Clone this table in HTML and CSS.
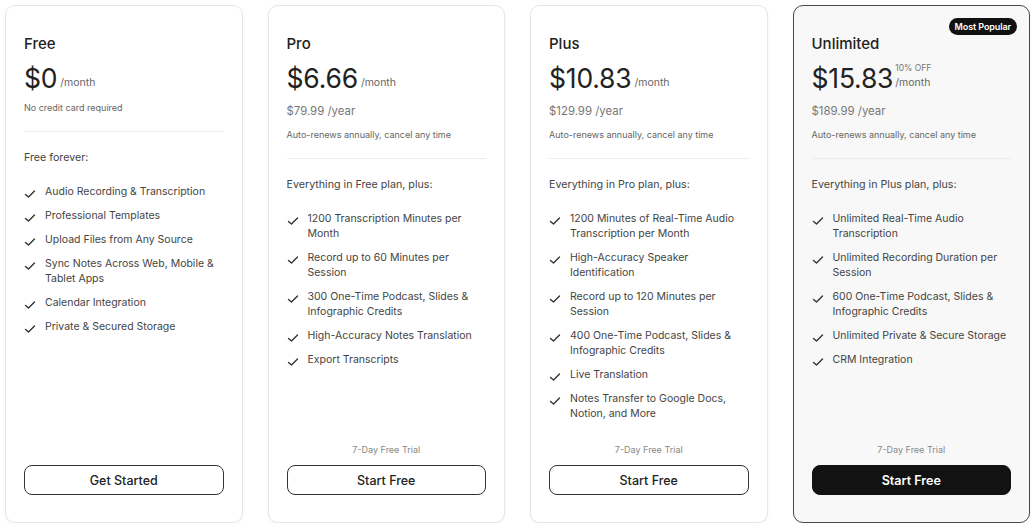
FILE: index.html
```html
<!DOCTYPE html>
<html>
<head>
<meta charset="utf-8">
<link rel="stylesheet" href="styles.css">
</head>
<body>
<div class="plans">
  <div class="card">
    <h2 class="title">Free</h2>
    <div class="price"><span class="amount">$0</span><span class="per">/month</span></div>
    <p class="note note-first">No credit card required</p>
    <hr class="divider">
    <p class="intro">Free forever:</p>
    <ul class="features">
      <li><svg class="check" viewBox="0 0 12 10"><polyline points="1.5,5.5 4.5,8 10.5,2"/></svg><span>Audio Recording &amp; Transcription</span></li>
      <li><svg class="check" viewBox="0 0 12 10"><polyline points="1.5,5.5 4.5,8 10.5,2"/></svg><span>Professional Templates</span></li>
      <li><svg class="check" viewBox="0 0 12 10"><polyline points="1.5,5.5 4.5,8 10.5,2"/></svg><span>Upload Files from Any Source</span></li>
      <li><svg class="check" viewBox="0 0 12 10"><polyline points="1.5,5.5 4.5,8 10.5,2"/></svg><span>Sync Notes Across Web, Mobile &amp; Tablet Apps</span></li>
      <li><svg class="check" viewBox="0 0 12 10"><polyline points="1.5,5.5 4.5,8 10.5,2"/></svg><span>Calendar Integration</span></li>
      <li><svg class="check" viewBox="0 0 12 10"><polyline points="1.5,5.5 4.5,8 10.5,2"/></svg><span>Private &amp; Secured Storage</span></li>
    </ul>
    <div class="footer">
      <button class="btn">Get Started</button>
    </div>
  </div>

  <div class="card">
    <h2 class="title">Pro</h2>
    <div class="price"><span class="amount">$6.66</span><span class="per">/month</span></div>
    <p class="year">$79.99 /year</p>
    <p class="note">Auto-renews annually, cancel any time</p>
    <hr class="divider">
    <p class="intro">Everything in Free plan, plus:</p>
    <ul class="features">
      <li><svg class="check" viewBox="0 0 12 10"><polyline points="1.5,5.5 4.5,8 10.5,2"/></svg><span>1200 Transcription Minutes per Month</span></li>
      <li><svg class="check" viewBox="0 0 12 10"><polyline points="1.5,5.5 4.5,8 10.5,2"/></svg><span>Record up to 60 Minutes per Session</span></li>
      <li><svg class="check" viewBox="0 0 12 10"><polyline points="1.5,5.5 4.5,8 10.5,2"/></svg><span>300 One-Time Podcast, Slides &amp; Infographic Credits</span></li>
      <li><svg class="check" viewBox="0 0 12 10"><polyline points="1.5,5.5 4.5,8 10.5,2"/></svg><span>High-Accuracy Notes Translation</span></li>
      <li><svg class="check" viewBox="0 0 12 10"><polyline points="1.5,5.5 4.5,8 10.5,2"/></svg><span>Export Transcripts</span></li>
    </ul>
    <div class="footer">
      <p class="trial">7-Day Free Trial</p>
      <button class="btn">Start Free</button>
    </div>
  </div>

  <div class="card">
    <h2 class="title">Plus</h2>
    <div class="price"><span class="amount">$10.83</span><span class="per">/month</span></div>
    <p class="year">$129.99 /year</p>
    <p class="note">Auto-renews annually, cancel any time</p>
    <hr class="divider">
    <p class="intro">Everything in Pro plan, plus:</p>
    <ul class="features">
      <li><svg class="check" viewBox="0 0 12 10"><polyline points="1.5,5.5 4.5,8 10.5,2"/></svg><span>1200 Minutes of Real-Time Audio Transcription per Month</span></li>
      <li><svg class="check" viewBox="0 0 12 10"><polyline points="1.5,5.5 4.5,8 10.5,2"/></svg><span>High-Accuracy Speaker Identification</span></li>
      <li><svg class="check" viewBox="0 0 12 10"><polyline points="1.5,5.5 4.5,8 10.5,2"/></svg><span>Record up to 120 Minutes per Session</span></li>
      <li><svg class="check" viewBox="0 0 12 10"><polyline points="1.5,5.5 4.5,8 10.5,2"/></svg><span>400 One-Time Podcast, Slides &amp; Infographic Credits</span></li>
      <li><svg class="check" viewBox="0 0 12 10"><polyline points="1.5,5.5 4.5,8 10.5,2"/></svg><span>Live Translation</span></li>
      <li><svg class="check" viewBox="0 0 12 10"><polyline points="1.5,5.5 4.5,8 10.5,2"/></svg><span>Notes Transfer to Google Docs, Notion, and More</span></li>
    </ul>
    <div class="footer">
      <p class="trial">7-Day Free Trial</p>
      <button class="btn">Start Free</button>
    </div>
  </div>

  <div class="card card-popular">
    <span class="badge">Most Popular</span>
    <h2 class="title">Unlimited</h2>
    <div class="price"><span class="amount">$15.83</span><span class="per-stack"><span class="off">10% OFF</span><span class="per">/month</span></span></div>
    <p class="year">$189.99 /year</p>
    <p class="note">Auto-renews annually, cancel any time</p>
    <hr class="divider">
    <p class="intro">Everything in Plus plan, plus:</p>
    <ul class="features">
      <li><svg class="check" viewBox="0 0 12 10"><polyline points="1.5,5.5 4.5,8 10.5,2"/></svg><span>Unlimited Real-Time Audio Transcription</span></li>
      <li><svg class="check" viewBox="0 0 12 10"><polyline points="1.5,5.5 4.5,8 10.5,2"/></svg><span>Unlimited Recording Duration per Session</span></li>
      <li><svg class="check" viewBox="0 0 12 10"><polyline points="1.5,5.5 4.5,8 10.5,2"/></svg><span>600 One-Time Podcast, Slides &amp; Infographic Credits</span></li>
      <li><svg class="check" viewBox="0 0 12 10"><polyline points="1.5,5.5 4.5,8 10.5,2"/></svg><span>Unlimited Private &amp; Secure Storage</span></li>
      <li><svg class="check" viewBox="0 0 12 10"><polyline points="1.5,5.5 4.5,8 10.5,2"/></svg><span>CRM Integration</span></li>
    </ul>
    <div class="footer">
      <p class="trial">7-Day Free Trial</p>
      <button class="btn btn-dark">Start Free</button>
    </div>
  </div>
</div>
</body>
</html>
```

FILE: styles.css
```css
* { box-sizing: border-box; }
html, body { margin: 0; padding: 0; background: #ffffff; }
body {
  font-family: Inter, "Liberation Sans", sans-serif;
  color: #222;
}
.plans {
  display: grid;
  grid-template-columns: repeat(4, 1fr);
  gap: 25px;
  padding: 5px 5px 0 5px;
  height: 523px;
}
.card {
  position: relative;
  display: flex;
  flex-direction: column;
  border: 1px solid #e6e6e6;
  border-radius: 10px;
  padding: 28px 18px 27px 18px;
  background: #fff;
  box-shadow: 0 1px 3px rgba(0,0,0,0.05);
  height: 518px;
}
.card-popular {
  background: #f8f8f8;
  border-color: #4a4a4a;
}
.badge {
  position: absolute;
  top: 12px;
  right: 12px;
  background: #111;
  color: #fff;
  font-size: 9px;
  font-weight: 600;
  line-height: 11px;
  padding: 3px 6px 3px 6px;
  border-radius: 9px;
  letter-spacing: -0.1px;
}
.title {
  margin: 0;
  font-size: 15px;
  line-height: 20px;
  font-weight: 500;
  color: #222;
}
.price {
  display: flex;
  align-items: flex-end;
  margin-top: 7px;
  height: 34px;
}
.amount {
  font-size: 26.5px;
  line-height: 34px;
  font-weight: 400;
  color: #222;
  letter-spacing: -0.2px;
}
.per {
  font-size: 10.5px;
  line-height: 14px;
  color: #666;
  margin-left: 3px;
  margin-bottom: 5px;
}
.per-stack {
  display: flex;
  flex-direction: column;
  margin-left: 2px;
  margin-bottom: 5px;
}
.per-stack .per { margin: 0; }
.off {
  font-size: 8.5px;
  line-height: 11px;
  color: #777;
  margin-bottom: 2px;
}
.year {
  margin: 8px 0 0 0;
  font-size: 11.4px;
  line-height: 16px;
  color: #777;
}
.note {
  margin: 9px 0 0 0;
  font-size: 9px;
  line-height: 14px;
  color: #666;
}
.note-first { margin-top: 6px; }
.divider {
  border: 0;
  border-top: 1px solid #ececec;
  margin: 16px 0 0 0;
  height: 0;
}
.intro {
  margin: 18px 0 0 0;
  font-size: 10.7px;
  line-height: 16px;
  color: #444;
}
.features {
  list-style: none;
  margin: 18px 0 0 0;
  padding: 0;
  display: flex;
  flex-direction: column;
  gap: 9px;
}
.features li {
  display: flex;
  align-items: flex-start;
  gap: 9px;
  font-size: 10.5px;
  line-height: 15px;
  color: #444;
}
.check {
  flex: none;
  width: 12px;
  height: 10px;
  margin-top: 5px;
  fill: none;
  stroke: #333;
  stroke-width: 1.4;
  stroke-linecap: round;
  stroke-linejoin: round;
}
.footer {
  margin-top: auto;
  display: flex;
  flex-direction: column;
  align-items: stretch;
}
.trial {
  margin: 0 0 8px 0;
  text-align: center;
  font-size: 9px;
  line-height: 14px;
  color: #888;
}
.btn {
  height: 30px;
  border: 1px solid #333;
  border-radius: 8px;
  background: #fff;
  font-family: Inter, "Liberation Sans", sans-serif;
  font-size: 12.5px;
  font-weight: 500;
  color: #222;
  cursor: pointer;
}
.btn-dark {
  background: #121212;
  border-color: #121212;
  color: #fff;
  font-weight: 600;
}
```
